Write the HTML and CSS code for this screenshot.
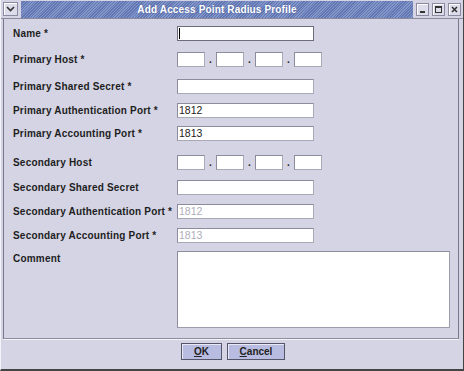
FILE: index.html
```html
<!DOCTYPE html>
<html lang="en">
<head>
    <meta charset="UTF-8">
    <title>Add Access Point Radius Profile</title>
    <link rel="stylesheet" href="styles.css">
</head>
<body>
    <div class="window">
        <div class="titlebar">
            <div class="tb-btn menu-btn">
                <svg width="9" height="6" viewBox="0 0 9 6"><path d="M1 1 L4.5 4.5 L8 1" fill="none" stroke="#333" stroke-width="1.6"/></svg>
            </div>
            <div class="title-strip">Add Access Point Radius Profile</div>
            <div class="tb-controls">
                <div class="tb-btn">
                    <svg width="7" height="7" viewBox="0 0 7 7"><rect x="1" y="5" width="5" height="2" fill="#333"/></svg>
                </div>
                <div class="tb-btn">
                    <svg width="7" height="7" viewBox="0 0 7 7"><rect x="0.5" y="0.5" width="6" height="6" fill="none" stroke="#333"/><rect x="0" y="0" width="7" height="2" fill="#333"/></svg>
                </div>
                <div class="tb-btn">
                    <svg width="7" height="7" viewBox="0 0 7 7"><path d="M1 1 L6 6 M6 1 L1 6" stroke="#333" stroke-width="1.6"/></svg>
                </div>
            </div>
        </div>

        <div class="client">
            <div class="form-panel">
                <label class="field-label">Name *</label>
                <div class="text-field focused"><span class="caret"></span></div>

                <label class="field-label">Primary Host *</label>
                <div class="ip-field">
                    <div class="ip-box"></div><span class="ip-dot">.</span>
                    <div class="ip-box"></div><span class="ip-dot">.</span>
                    <div class="ip-box"></div><span class="ip-dot">.</span>
                    <div class="ip-box"></div>
                </div>

                <label class="field-label">Primary Shared Secret *</label>
                <div class="text-field"></div>

                <label class="field-label">Primary Authentication Port *</label>
                <div class="text-field">1812</div>

                <label class="field-label">Primary Accounting Port *</label>
                <div class="text-field">1813</div>

                <label class="field-label">Secondary Host</label>
                <div class="ip-field">
                    <div class="ip-box"></div><span class="ip-dot">.</span>
                    <div class="ip-box"></div><span class="ip-dot">.</span>
                    <div class="ip-box"></div><span class="ip-dot">.</span>
                    <div class="ip-box"></div>
                </div>

                <label class="field-label">Secondary Shared Secret</label>
                <div class="text-field"></div>

                <label class="field-label">Secondary Authentication Port *</label>
                <div class="text-field disabled">1812</div>

                <label class="field-label">Secondary Accounting Port *</label>
                <div class="text-field disabled">1813</div>

                <label class="field-label">Comment</label>
                <div class="text-area"></div>
            </div>

            <div class="button-bar">
                <button class="dlg-btn ok-btn"><u>O</u>K</button>
                <button class="dlg-btn cancel-btn"><u>C</u>ancel</button>
            </div>
        </div>
    </div>
</body>
</html>
```

FILE: styles.css
```css
* {
    margin: 0;
    padding: 0;
    box-sizing: border-box;
}

body {
    background: #d4d4e4;
    font-family: 'Liberation Sans', Arial, sans-serif;
    font-size: 10px;
    color: #222;
}

.window {
    width: 464px;
    height: 371px;
    display: flex;
    flex-direction: column;
    background: #d4d4e4;
    border-right: 1px solid #444;
    border-bottom: 2px solid #444;
    border-left: 1px solid #f4f4f8;
}

/* title bar */
.titlebar {
    height: 19px;
    display: flex;
    align-items: center;
    padding: 0 2px 0 2px;
    border-bottom: 1px solid #8a8a9e;
    flex-shrink: 0;
}

.tb-btn {
    width: 13px;
    height: 13px;
    display: flex;
    align-items: center;
    justify-content: center;
    background: #dcdcea;
    border: 1px solid #8a8aa0;
    box-shadow: inset 1px 1px 0 #fff;
}

.menu-btn {
    width: 15px;
    height: 14px;
}

.title-strip {
    flex: 1;
    height: 17px;
    margin: 0 3px 0 3px;
    display: flex;
    align-items: center;
    justify-content: center;
    color: #fff;
    font-weight: bold;
    font-size: 10px;
    letter-spacing: 0.15px;
    background-color: #6276b2;
    background-image: repeating-linear-gradient(135deg, #6276b2 0, #6276b2 1px, #8396ca 1px, #8396ca 2px);
    text-shadow: 0 0 2px #4a5d96;
}

.tb-controls {
    display: flex;
    gap: 3px;
}

/* client area */
.client {
    flex: 1;
    display: flex;
    flex-direction: column;
    padding-left: 2px;
}

.form-panel {
    height: 320px;
    width: 456px;
    border-left: 1px solid #77778a;
    border-right: 1px solid #77778a;
    border-bottom: 1px solid #8e8e9e;
    box-shadow: 0 1px 0 #f4f4f8;
    padding: 7px 0 0 9px;
    display: grid;
    grid-template-columns: 164px 1fr;
    grid-template-rows: 26px 27px 24px 23px 29px 25px 24px 24px 23px 77px;
    align-items: start;
}

.field-label {
    height: 15px;
    line-height: 15px;
    font-weight: bold;
    letter-spacing: 0.2px;
    white-space: nowrap;
    color: #1e1e1e;
}

.text-field {
    width: 137px;
    height: 15px;
    background: #fff;
    border: 1px solid #8c8c9c;
    border-right-color: #a8a8b6;
    border-bottom-color: #a8a8b6;
    font-size: 10.5px;
    line-height: 13px;
    padding-left: 1px;
    color: #222;
    position: relative;
}

.text-field.focused {
    border-color: #6c6c7c;
}

.text-field.disabled {
    color: #aeaeba;
}

.caret {
    position: absolute;
    left: 1px;
    top: 1px;
    width: 1px;
    height: 11px;
    background: #000;
}

.ip-field {
    display: flex;
    align-items: center;
    height: 15px;
}

.ip-box {
    width: 28px;
    height: 15px;
    background: #fff;
    border: 1px solid #8c8c9c;
    border-right-color: #a8a8b6;
    border-bottom-color: #a8a8b6;
}

.ip-dot {
    width: 11px;
    text-align: center;
    font-weight: bold;
    line-height: 15px;
}

.text-area {
    width: 273px;
    height: 77px;
    background: #fff;
    border: 1px solid #8c8c9c;
    border-right-color: #9c9cac;
    border-bottom-color: #9c9cac;
}

/* buttons */
.button-bar {
    flex: 1;
    display: flex;
    justify-content: center;
    align-items: flex-start;
    gap: 5px;
    padding-top: 4px;
}

.dlg-btn {
    height: 17px;
    font-family: 'Liberation Sans', Arial, sans-serif;
    font-size: 10px;
    font-weight: bold;
    color: #222;
    background: #b8bce0;
    border: 1px solid #55556a;
    box-shadow: inset 1px 1px 0 #e8e8f6;
}

.ok-btn {
    width: 41px;
}

.cancel-btn {
    width: 58px;
}
```
